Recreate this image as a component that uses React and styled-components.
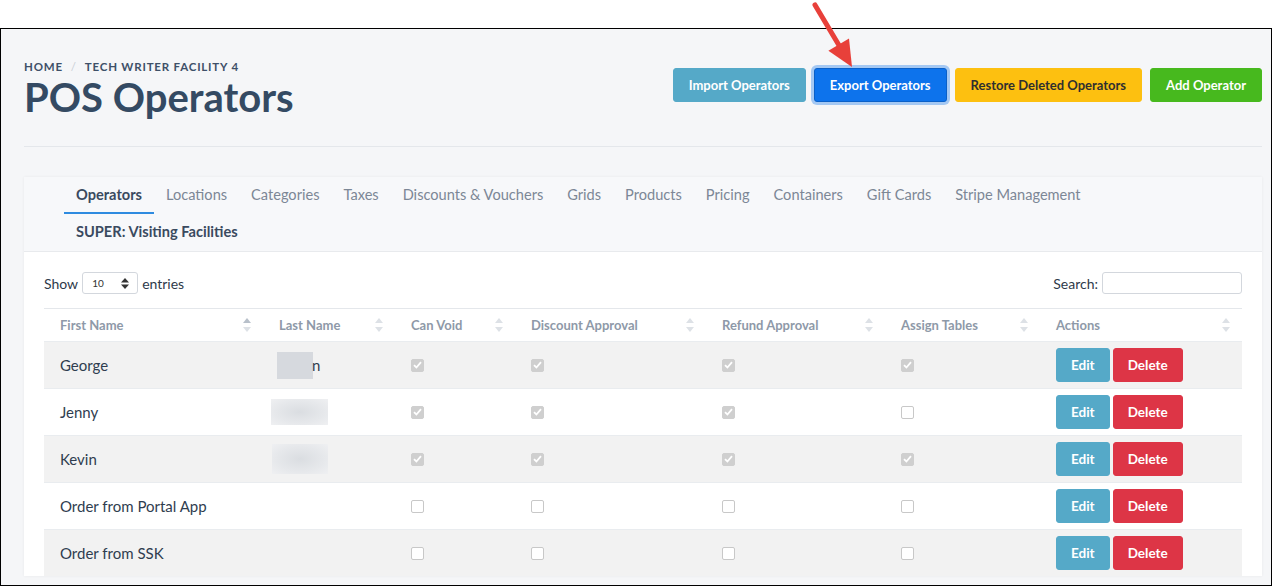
import React from "react";
import styled, { createGlobalStyle } from "styled-components";

const GlobalStyle = createGlobalStyle`
  html, body {
    margin: 0;
    padding: 0;
    background: #ffffff;
  }
  body {
    font-family: Lato, "Noto Sans", sans-serif;
    color: #2f3d4f;
  }
  * {
    box-sizing: border-box;
  }
`;

const Page = styled.div`
  position: relative;
  padding-top: 28px;
`;

const Frame = styled.div`
  width: 1272px;
  height: 558px;
  border: 1px solid #000;
  background: #f5f6f8;
  overflow: hidden;
  padding: 0 9px 0 23px;
`;

const Header = styled.div`
  display: flex;
  justify-content: space-between;
  align-items: flex-start;
  padding-top: 30px;
  padding-bottom: 27px;
  border-bottom: 1px solid #e4e7eb;
`;

const TitleBlock = styled.div`
  display: flex;
  flex-direction: column;
`;

const Crumbs = styled.div`
  display: flex;
  align-items: center;
  gap: 8px;
  font-size: 11.5px;
  font-weight: 700;
  letter-spacing: 0.8px;
  text-transform: uppercase;
  color: #3e5068;
  line-height: 16px;
`;

const Slash = styled.span`
  color: #c9ced6;
  font-weight: 400;
`;

const Title = styled.h1`
  margin: 0;
  font-size: 40px;
  line-height: 44px;
  font-weight: 700;
  color: #344a63;
`;

const Actions = styled.div`
  display: flex;
  gap: 8px;
  margin-top: 9px;
`;

const palette = {
  info: { bg: "#55a9c8", fg: "#fff", border: "#55a9c8" },
  primary: { bg: "#0d73ec", fg: "#fff", border: "#0a60c8" },
  warning: { bg: "#fdc010", fg: "#2f2f2f", border: "#fdc010" },
  success: { bg: "#47b91e", fg: "#fff", border: "#47b91e" },
  danger: { bg: "#dd3546", fg: "#fff", border: "#dd3546" },
};

const Button = styled.button`
  height: 34px;
  padding: 0 ${(p) => (p.$small ? "14px" : "15px")};
  border-radius: 3px;
  border: 1px solid ${(p) => palette[p.$kind].border};
  background: ${(p) => palette[p.$kind].bg};
  color: ${(p) => palette[p.$kind].fg};
  font-family: inherit;
  font-size: ${(p) => (p.$small ? "13.5px" : "13px")};
  font-weight: 700;
  cursor: pointer;
  box-shadow: ${(p) => (p.$focus ? "0 0 0 3px rgba(13, 115, 236, 0.35)" : "none")};
`;

const Card = styled.div`
  margin-top: 30px;
  background: #fff;
  box-shadow: 0 0 3px rgba(0, 0, 0, 0.06);
`;

const CardHead = styled.div`
  background: #f7f8fa;
  border-bottom: 1px solid #e8eaed;
  padding: 0 40px;
  display: flex;
  flex-wrap: wrap;
  width: 100%;
`;

const TabRow = styled.div`
  display: flex;
  width: 100%;
`;

const Tab = styled.div`
  padding: 9px 12px 8px;
  line-height: 18px;
  font-size: 14.6px;
  font-weight: ${(p) => (p.$bold ? 700 : 400)};
  color: ${(p) => (p.$bold ? "#3a4a5f" : "#7c8796")};
  border-bottom: 2px solid ${(p) => (p.$active ? "#2e8be0" : "transparent")};
  white-space: nowrap;
`;

const CardBody = styled.div`
  padding: 20px 20px 0;
`;

const Controls = styled.div`
  display: flex;
  justify-content: space-between;
  align-items: center;
  font-size: 14px;
  color: #2e3a4a;
  margin-bottom: 14px;
`;

const Inline = styled.label`
  display: flex;
  align-items: center;
  gap: 4px;
`;

const Select = styled.div`
  width: 56px;
  height: 22px;
  border: 1px solid #d3d7dd;
  border-radius: 3px;
  background: #fff;
  display: flex;
  align-items: center;
  justify-content: space-between;
  padding: 0 8px 0 9px;
  font-size: 10px;
  color: #333;
`;

const SearchBox = styled.div`
  width: 140px;
  height: 22px;
  border: 1px solid #d3d7dd;
  border-radius: 3px;
  background: #fff;
`;

const Table = styled.div`
  border-top: 1px solid #e4e7eb;
`;

const cols = "219px 132px 120px 191px 179px 155px 202px";

const HeadRow = styled.div`
  display: grid;
  grid-template-columns: ${cols};
  height: 32px;
`;

const Th = styled.div`
  display: flex;
  align-items: center;
  justify-content: space-between;
  padding: 0 12px 0 16px;
  font-size: 13px;
  font-weight: 700;
  color: #8e99a8;
`;

const Row = styled.div`
  display: grid;
  grid-template-columns: ${cols};
  height: 47px;
  border-top: 1px solid #e9ecef;
  background: ${(p) => (p.$striped ? "#f2f2f2" : "#fff")};
`;

const Td = styled.div`
  display: flex;
  align-items: center;
  padding-left: 16px;
  font-size: 15px;
  color: #2f3d4f;
  gap: 3px;
`;

const Box = styled.span`
  width: 13px;
  height: 13px;
  border-radius: 2px;
  display: inline-flex;
  align-items: center;
  justify-content: center;
  background: ${(p) => (p.$checked ? "#cfcfcf" : "#fff")};
  border: 1px solid ${(p) => (p.$checked ? "#cfcfcf" : "#c8c8c8")};
`;

const Blur = styled.span`
  display: inline-block;
  width: ${(p) => p.$w}px;
  height: ${(p) => p.$h}px;
  margin-left: ${(p) => p.$ml || 0}px;
  margin-right: ${(p) => p.$mr || 0}px;
  background: ${(p) =>
    p.$soft
      ? "radial-gradient(ellipse at center, #dadde1 0%, #e6e8eb 60%, #eff0f2 100%)"
      : "#d6d9de"};
`;

const Arrow = styled.svg`
  position: absolute;
  left: 809px;
  top: 1px;
`;

const Sorter = ({ active }) => (
  <svg width="8" height="14" viewBox="0 0 8 14">
    <path d="M4 0 L8 5 H0 Z" fill={active ? "#b8c0ca" : "#dde1e6"} />
    <path d="M4 14 L8 9 H0 Z" fill="#dde1e6" />
  </svg>
);

const Check = ({ checked }) => (
  <Box $checked={checked}>
    {checked && (
      <svg width="9" height="8" viewBox="0 0 9 8">
        <path d="M1 4.2 L3.4 6.5 L8 1.2" stroke="#fff" strokeWidth="1.8" fill="none" />
      </svg>
    )}
  </Box>
);

const tabs = [
  "Operators",
  "Locations",
  "Categories",
  "Taxes",
  "Discounts & Vouchers",
  "Grids",
  "Products",
  "Pricing",
  "Containers",
  "Gift Cards",
  "Stripe Management",
];

const headers = [
  "First Name",
  "Last Name",
  "Can Void",
  "Discount Approval",
  "Refund Approval",
  "Assign Tables",
  "Actions",
];

const rows = [
  { name: "George", last: "george", flags: [1, 1, 1, 1] },
  { name: "Jenny", last: "jenny", flags: [1, 1, 1, 0] },
  { name: "Kevin", last: "kevin", flags: [1, 1, 1, 1] },
  { name: "Order from Portal App", last: null, flags: [0, 0, 0, 0] },
  { name: "Order from SSK", last: null, flags: [0, 0, 0, 0] },
];

const LastName = ({ kind }) => {
  if (kind === "george")
    return (
      <>
        <Blur $w={36} $h={27} $ml={-2} $mr={-4} />
        <span>n</span>
      </>
    );
  if (kind === "jenny") return <Blur $w={57} $h={26} $ml={-8} $soft />;
  if (kind === "kevin") return <Blur $w={56} $h={30} $ml={-7} $soft />;
  return null;
};

const App = () => {
  return (
    <Page>
      <GlobalStyle />
      <Frame>
        <Header>
          <TitleBlock>
            <Crumbs>
              <span>Home</span>
              <Slash>/</Slash>
              <span>Tech Writer Facility 4</span>
            </Crumbs>
            <Title>POS Operators</Title>
          </TitleBlock>
          <Actions>
            <Button $kind="info">Import Operators</Button>
            <Button $kind="primary" $focus>
              Export Operators
            </Button>
            <Button $kind="warning">Restore Deleted Operators</Button>
            <Button $kind="success">Add Operator</Button>
          </Actions>
        </Header>

        <Card>
          <CardHead>
            <TabRow>
              {tabs.map((t, i) => (
                <Tab key={t} $active={i === 0} $bold={i === 0}>
                  {t}
                </Tab>
              ))}
            </TabRow>
            <TabRow>
              <Tab $bold>SUPER: Visiting Facilities</Tab>
            </TabRow>
          </CardHead>
          <CardBody>
            <Controls>
              <Inline>
                Show
                <Select>
                  <span>10</span>
                  <svg width="8" height="11" viewBox="0 0 8 11">
                    <path d="M4 0 L8 4.5 H0 Z" fill="#333" />
                    <path d="M4 11 L8 6.5 H0 Z" fill="#333" />
                  </svg>
                </Select>
                entries
              </Inline>
              <Inline>
                Search:
                <SearchBox />
              </Inline>
            </Controls>
            <Table>
              <HeadRow>
                {headers.map((h, i) => (
                  <Th key={h}>
                    {h}
                    <Sorter active={i === 0} />
                  </Th>
                ))}
              </HeadRow>
              {rows.map((r, i) => (
                <Row key={r.name} $striped={i % 2 === 0}>
                  <Td>{r.name}</Td>
                  <Td>
                    <LastName kind={r.last} />
                  </Td>
                  {r.flags.map((f, j) => (
                    <Td key={j}>
                      <Check checked={!!f} />
                    </Td>
                  ))}
                  <Td>
                    <Button $kind="info" $small>
                      Edit
                    </Button>
                    <Button $kind="danger" $small>
                      Delete
                    </Button>
                  </Td>
                </Row>
              ))}
            </Table>
          </CardBody>
        </Card>
      </Frame>
      <Arrow width="60" height="80" viewBox="0 0 60 80">
        <line x1="6" y1="4" x2="31" y2="46" stroke="#e8403a" strokeWidth="5" strokeLinecap="round" />
        <path d="M19.4 49.8 L40 37.6 L43 66 Z" fill="#e8403a" />
      </Arrow>
    </Page>
  );
};

export default App;
